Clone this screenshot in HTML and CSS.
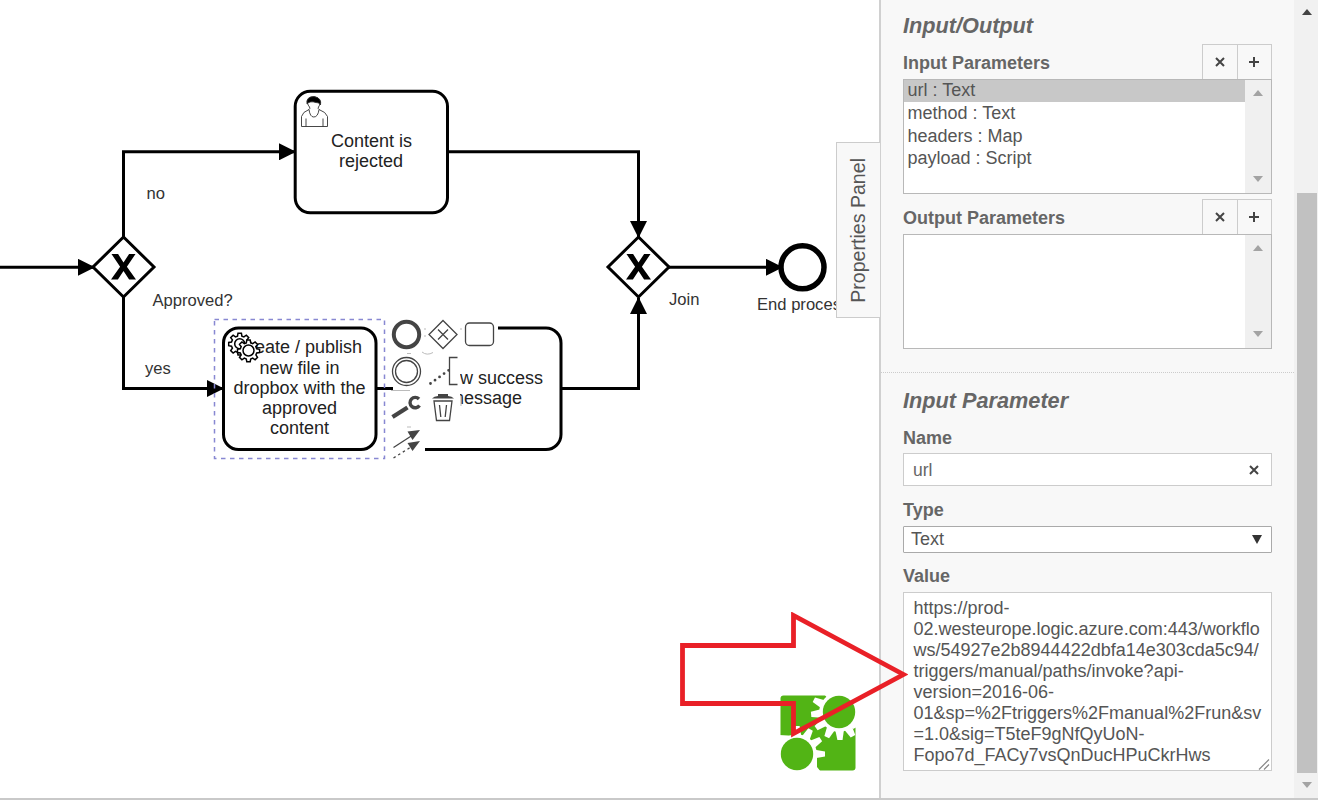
FILE: index.html
```html
<!DOCTYPE html>
<html lang="en">
<head>
<meta charset="utf-8">
<title>Process modeler</title>
<link rel="stylesheet" href="styles.css">
</head>
<body>
<div class="app">
  <main class="canvas">
    <svg class="diagram" width="879" height="798" viewBox="0 0 879 798">
      <defs>
        <marker id="head" viewBox="0 0 17 17" refX="16" refY="8.5" markerWidth="17" markerHeight="17" markerUnits="userSpaceOnUse" orient="auto"><path d="M0 0L17 8.500L0 17Z"/></marker>
        <g id="gateway"><path class="shape" d="M0-30L30.500 0L0 30L-30.500 0Z"/><path d="M-12-13h6.600L0-4.500L5.600-13H12L3.400-.3L12.500 12.500H5.600L0 4L-5.600 12.500h-6.900L-3.400-.3Z"/></g>
        <path id="cog" d="M-1.700-10.500h3.400l.5 2.900 2 .8 2.400-1.700 2.400 2.400-1.700 2.300.9 2.100 2.900.5v3.200l-2.900.5-.8 2 1.600 2.400-2.400 2.400-2.400-1.700-2 .9-.5 2.800h-3.400l-.5-2.800-2-.9-2.400 1.700-2.400-2.400 1.700-2.400-.9-2-2.800-.5v-3.200l2.800-.5.9-2.100-1.700-2.300 2.400-2.400 2.400 1.700 2-.8Z"/>
        <path id="tooth" d="M18-4.300L28-2.600V2.600L18 4.300Z"/>
      </defs>
      <g class="flow">
        <path d="M0 267.300H94" marker-end="url(#head)"/>
        <path d="M123.500 238V151.800H295" marker-end="url(#head)"/>
        <path d="M123.500 296V388.500H223" marker-end="url(#head)"/>
        <path d="M448 151.800H638.500V237" marker-end="url(#head)"/>
        <path d="M376 388.500H410"/>
        <path d="M561 388.500H638.500V298" marker-end="url(#head)"/>
        <path d="M669 267.300H782" marker-end="url(#head)"/>
      </g>
      <use href="#gateway" x="123.500" y="267"/>
      <use href="#gateway" x="638.500" y="267"/>
      <circle class="end" cx="802.500" cy="267.300" r="21.500"/>

      <rect class="shape" x="295.200" y="91.300" width="152.300" height="121.500" rx="15"/>
      <g class="user">
        <path d="M301.500 126.500V116.500Q302.500 112 309 109.500Q310 117 313.800 117Q318 117 319 109.500Q326 112 327.500 116.500V126.500ZM306 126.500V118.500M323 126.500V118.500"/>
        <path d="M309 109.500Q310.500 108.500 309.500 107C305.500 102 307 97 313.500 97S322 102 318.500 107Q317.500 108.500 319 109.500"/>
        <path class="solid" d="M307 104Q306 96.500 314 96.500Q322 98 320.500 105Q319 102 316 102.500Q310 100.500 307 104Z"/>
      </g>
      <g class="task-text" text-anchor="middle">
        <text x="371.500" y="147">Content is</text>
        <text x="371" y="166.500">rejected</text>
      </g>

      <rect class="shape" x="408" y="328" width="153" height="121.500" rx="15"/>
      <g class="task-text" text-anchor="end">
        <text x="543" y="383.500">Show success</text>
        <text x="522" y="403.500">message</text>
      </g>
      <path class="pad" d="M386 314H498V352H460V415H425V462H386Z"/>
      <path class="pad-edge" d="M376 388.500H393"/>
      <path class="trace" d="M391 390.500H410M422 352q5 4 11 .5M407 353.500h4M407 427h4M425 328v2M425 335v2M461 328v2M461 396v10"/>

      <rect class="selection" x="214.500" y="319.500" width="170" height="139"/>
      <rect class="shape" x="223.500" y="328" width="152.500" height="121.500" rx="15"/>
      <g class="task-text" text-anchor="middle">
        <text x="299" y="353">Create / publish</text>
        <text x="299.500" y="373.500">new file in</text>
        <text x="299.500" y="394">dropbox with the</text>
        <text x="299.500" y="414">approved</text>
        <text x="299.500" y="434">content</text>
      </g>
      <g class="cogs">
        <use href="#cog" x="239.700" y="343.700"/>
        <circle cx="239.700" cy="343.700" r="5"/>
        <use href="#cog" x="248.500" y="350.500"/>
        <circle cx="248.500" cy="350.500" r="5.500"/>
      </g>

      <g class="pad-icons">
        <circle cx="406.500" cy="334.500" r="12.700" stroke-width="4"/>
        <path d="M443 320.500L457 334.500L443 348.500L429 334.500ZM438 329.500L448 339.500M448 329.500L438 339.500"/>
        <rect x="465.500" y="323" width="28" height="22.500" rx="4"/>
        <circle cx="406.500" cy="371.500" r="14"/>
        <circle cx="406.500" cy="371.500" r="11"/>
        <path d="M457.500 357.500H449.500V384.500H457.500"/>
        <path d="M430.500 383.500L449 370" stroke-width="2.800" stroke-linecap="round" stroke-dasharray="0 5.600"/>
        <path d="M392.500 417L407.500 407.500" stroke-width="4.300"/>
        <path d="M419 399A5.200 5.200 0 1 0 419.500 405.500" stroke-width="3.400"/>
        <path d="M434 401L436.500 420.500H449.500L452 401ZM439.500 405l1.300 12M446.500 405l-1.300 12"/>
        <path class="filled" d="M432 398.500Q434 396 438 396V394H448V396Q452 396 454 398.500Z"/>
        <path d="M393.500 447.500L412 435.500"/>
        <path class="filled" d="M407.500 431.500L420 430L412.500 440Z"/>
        <path d="M393.500 458L411 447" stroke-dasharray="2.500 3"/>
        <path class="filled" d="M407.500 443L420 441L412.500 451Z"/>
      </g>

      <g class="label">
        <text x="146.500" y="199.300">no</text>
        <text x="152.500" y="306">Approved?</text>
        <text x="145" y="374">yes</text>
        <text x="669" y="305">Join</text>
        <text x="757" y="310">End process</text>
      </g>

      <g class="logo">
        <rect x="780.500" y="695.500" width="75" height="75" rx="3"/>
        <g class="cut">
          <path d="M824 694H857V727L853 729L839 712ZM779 735L797 736L817 754V767L821 772H779Z"/>
          <g transform="translate(839 712)">
            <circle r="19.800"/>
            <use href="#tooth" transform="rotate(206)"/><use href="#tooth" transform="rotate(175)"/><use href="#tooth" transform="rotate(145)"/><use href="#tooth" transform="rotate(116)"/><use href="#tooth" transform="rotate(88)"/><use href="#tooth" transform="rotate(60)"/>
          </g>
          <g transform="translate(797 754)">
            <circle r="19.800"/>
            <use href="#tooth"/><use href="#tooth" transform="rotate(-32)"/><use href="#tooth" transform="rotate(-61)"/><use href="#tooth" transform="rotate(-90)"/>
          </g>
        </g>
        <circle cx="839" cy="712" r="16.200"/><circle cx="797" cy="754" r="16.200"/>
      </g>
    </svg>
    <div class="panel-toggle">Properties Panel</div>
  </main>

  <aside class="panel">
    <section class="group io">
      <h2>Input/Output</h2>
      <div class="row">
        <h3>Input Parameters</h3>
        <div class="actions"><button><svg width="10" height="10" viewBox="0 0 10 10"><path d="M1 1L9 9M9 1L1 9"/></svg></button><button><svg width="10" height="10" viewBox="0 0 10 10"><path d="M5 0V10M0 5H10"/></svg></button></div>
      </div>
      <div class="list">
        <ul><li class="selected">url : Text</li><li>method : Text</li><li>headers : Map</li><li>payload : Script</li></ul>
        <div class="list-bar"><i class="up"></i><i class="down"></i></div>
      </div>
      <div class="row second">
        <h3>Output Parameters</h3>
        <div class="actions"><button><svg width="10" height="10" viewBox="0 0 10 10"><path d="M1 1L9 9M9 1L1 9"/></svg></button><button><svg width="10" height="10" viewBox="0 0 10 10"><path d="M5 0V10M0 5H10"/></svg></button></div>
      </div>
      <div class="list">
        <ul></ul>
        <div class="list-bar"><i class="up"></i><i class="down"></i></div>
      </div>
    </section>
    <section class="group parameter">
      <h2>Input Parameter</h2>
      <h3 class="name">Name</h3>
      <div class="input"><span>url</span><svg width="10" height="10" viewBox="0 0 10 10"><path d="M1 1L9 9M9 1L1 9"/></svg></div>
      <h3 class="type">Type</h3>
      <div class="select"><span>Text</span><i></i></div>
      <h3 class="value">Value</h3>
      <div class="textarea">https://prod-<br>02.westeurope.logic.azure.com:443/workflo<br>ws/54927e2b8944422dbfa14e303cda5c94/<br>triggers/manual/paths/invoke?api-<br>version=2016-06-<br>01&amp;sp=%2Ftriggers%2Fmanual%2Frun&amp;sv<br>=1.0&amp;sig=T5teF9gNfQyUoN-<br>Fopo7d_FACy7vsQnDucHPuCkrHws
        <svg class="grip" width="12" height="12" viewBox="0 0 12 12"><path d="M1 11.500L11 1.500M6 11.500L11 6.500"/></svg>
      </div>
    </section>
  </aside>
  <div class="scrollbar"><i class="up"></i><div class="thumb"></div><i class="down"></i></div>
  <svg class="pointer" width="228" height="126" viewBox="680 612 228 126"><path d="M682.500 645.500H793.500V615.500L903.500 674.500L793.500 733.500V703.500H682.500Z"/></svg>
</div>
</body>
</html>
```
FILE: styles.css
```css
* { box-sizing: border-box; }
body { margin: 0; background: #fff; font-family: "Liberation Sans", Arial, sans-serif; }
.app { position: relative; display: flex; width: 1318px; height: 800px; overflow: hidden; border-bottom: 2px solid #c9c9c9; }
.canvas { position: relative; width: 879px; flex: none; }
.diagram { display: block; }
.flow path { fill: none; stroke: #000; stroke-width: 3; }
.shape { fill: #fff; stroke: #000; stroke-width: 3; }
.end { fill: #fff; stroke: #000; stroke-width: 5.5; }
.task-text { font-size: 18px; fill: #222; }
.label { font-size: 16.6px; fill: #333; }
.user path { fill: #fff; stroke: #333; stroke-width: .9; }
.user .solid { fill: #000; }
.cogs { fill: #fff; stroke: #000; stroke-width: 1.5; }
.selection { fill: none; stroke: #8888d2; stroke-width: 1.5; stroke-dasharray: 4.5 4.5; }
.pad { fill: #fff; }
.pad-edge { fill: none; stroke: #000; stroke-width: 3; }
.trace { fill: none; stroke: #bbb; stroke-width: 1; }
.pad-icons { fill: none; stroke: #444; stroke-width: 1.3; }
.pad-icons .filled { fill: #444; stroke: none; }
.logo { fill: #52b415; }
.logo .cut { fill: #fff; }
.panel-toggle { position: absolute; left: 836px; top: 142px; width: 44px; height: 176px; background: #f8f8f8; border: 1px solid #ccc; border-right: 0; writing-mode: sideways-lr; font-size: 19.6px; line-height: 43px; color: #555; text-align: center; }
.panel { width: 415px; flex: none; background: #f8f8f8; border-left: 2px solid #d0d0d0; color: #666; }
.group { padding: 0 22px; }
.io { height: 373px; padding-top: 14px; border-bottom: 1px dotted #ccc; }
.parameter { padding-top: 16px; }
h2 { margin: 0; font-size: 21.7px; line-height: 24px; font-style: italic; }
h3 { margin: 0; font-size: 18px; line-height: 20px; }
.row { display: flex; justify-content: space-between; height: 35px; margin-top: 6px; }
.row h3 { padding-top: 9px; }
.row.second { margin-top: 5px; }
.actions { display: flex; border: 1px solid #ccc; border-bottom: 0; width: 70px; }
button { flex: 1; padding: 0; border: 0; background: none; display: flex; align-items: center; justify-content: center; }
button + button { border-left: 1px solid #ccc; }
button path, .input path { stroke: #444; stroke-width: 2; }
.list { display: flex; height: 115px; border: 1px solid #b8b8b8; background: #fff; }
.list ul { flex: 1; margin: 0; padding: 0; list-style: none; font-size: 18px; line-height: 22.5px; color: #555; }
.list li { padding-left: 3.5px; }
.list .selected { height: 22px; line-height: 21px; background: #c8c8c8; }
.list-bar { width: 26px; background: #f0f0f0; display: flex; flex-direction: column; justify-content: space-between; align-items: center; padding: 10px 0 11px; }
.up, .down { width: 0; height: 0; border: 5.5px solid transparent; }
.up { border-top: 0; border-bottom: 6px solid #a3a3a3; }
.down { border-bottom: 0; border-top: 6px solid #a3a3a3; }
.name { margin-top: 15px; }
.input { display: flex; justify-content: space-between; align-items: center; height: 33px; margin-top: 5px; padding: 1px 12px 0 9px; border: 1px solid #ccc; background: #fff; font-size: 17.5px; }
.type { margin-top: 14px; }
.select { display: flex; justify-content: space-between; align-items: center; height: 27px; margin-top: 6px; padding: 0 9px 0 7px; border: 1px solid #aaa; border-radius: 1px; background: #fff; font-size: 18px; color: #555; }
.select i { border: 5px solid transparent; border-bottom: 0; border-top: 9px solid #333; }
.value { margin-top: 13px; }
.textarea { position: relative; height: 179px; margin-top: 6px; padding: 5px 0 0 9.5px; border: 1px solid #ccc; background: #fff; font-size: 18px; line-height: 21.05px; color: #555; white-space: nowrap; }
.grip { position: absolute; right: 1px; bottom: 0; stroke: #888; stroke-width: 1.2; }
.scrollbar { width: 24px; flex: none; background: #f1f1f1; display: flex; flex-direction: column; align-items: center; padding: 9px 1px 10px 3px; }
.scrollbar .up { border-bottom-color: #444; }
.thumb { width: 100%; height: 580px; margin-top: 178px; background: #c1c1c1; }
.scrollbar .down { margin-top: 9px; }
.pointer { position: absolute; left: 680px; top: 612px; fill: none; stroke: #e92027; stroke-width: 4.8; }
```
